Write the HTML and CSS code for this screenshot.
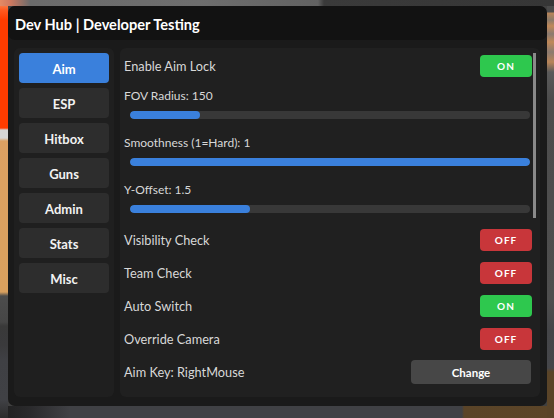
FILE: index.html
```html
<!DOCTYPE html>
<html>
<head>
<meta charset="utf-8">
<link rel="stylesheet" href="styles.css">
</head>
<body>
<div class="window">
  <div class="titlebar">Dev Hub | Developer Testing</div>
  <div class="body">
    <div class="sidebar">
      <div class="tab active">Aim</div>
      <div class="tab">ESP</div>
      <div class="tab">Hitbox</div>
      <div class="tab">Guns</div>
      <div class="tab">Admin</div>
      <div class="tab">Stats</div>
      <div class="tab">Misc</div>
    </div>
    <div class="content">
      <div class="scrollbar"></div>
      <div class="row">
        <span class="label">Enable Aim Lock</span>
        <span class="toggle on">ON</span>
      </div>
      <div class="slider">
        <span class="slabel">FOV Radius: 150</span>
        <div class="track"><div class="fill" style="width:17.5%"></div></div>
      </div>
      <div class="slider">
        <span class="slabel">Smoothness (1=Hard): 1</span>
        <div class="track"><div class="fill" style="width:100%"></div></div>
      </div>
      <div class="slider">
        <span class="slabel">Y-Offset: 1.5</span>
        <div class="track"><div class="fill" style="width:30%"></div></div>
      </div>
      <div class="row">
        <span class="label">Visibility Check</span>
        <span class="toggle off">OFF</span>
      </div>
      <div class="row">
        <span class="label">Team Check</span>
        <span class="toggle off">OFF</span>
      </div>
      <div class="row">
        <span class="label">Auto Switch</span>
        <span class="toggle on">ON</span>
      </div>
      <div class="row">
        <span class="label">Override Camera</span>
        <span class="toggle off">OFF</span>
      </div>
      <div class="row">
        <span class="label">Aim Key: RightMouse</span>
        <span class="change">Change</span>
      </div>
    </div>
  </div>
</div>
</body>
</html>
```

FILE: styles.css
```css
html, body {
  margin: 0;
  height: 100%;
}
body {
  width: 554px;
  height: 418px;
  overflow: hidden;
  box-sizing: border-box;
  padding: 6px 7px 0 8px;
  font-family: Lato, "Liberation Sans", sans-serif;
  background:
    linear-gradient(to right, #e48a64 0, #d07a60 10px, #6b6b6b 30px, #6e6e6e 200px, #626262 318px, #3a3a3a 324px, #363636 100%) left top / 100% 6px no-repeat,
    linear-gradient(to bottom, #f0a070 0, #ff5a20 10px, #ff3c00 20px, #ff3c00 128px, #d6d6d6 130px, #d6d6d6 138px, #dca062 141px, #d9a05e 292px, #4c4c4c 296px, #464646 322px, #393939 326px, #3a3a3c 345px, #3f4044 360px, #404145 400px, #2c2c2c 418px) left top / 8px 100% no-repeat,
    linear-gradient(to bottom, #4a4a4a 0, #4a4a4a 12px, #b88458 13px, #8a7a6a 20px, #c08858 26px, #8a7a70 34px, #c08858 42px, #8a7a70 52px, #b88458 62px, #5a5a5a 72px, #4c4c4c 100px, #4e4e4e 300px, #444548 330px, #45464a 368px, #5a4428 372px, #5a4428 100%) right top / 7px 100% no-repeat,
    linear-gradient(to right, #202020 0, #2a2a2c 30px, #404145 70px, #404145 462px, #5a4428 464px, #5c4528 100%) left bottom / 100% 12px no-repeat,
    #404040;
}
.window {
  width: 539px;
  height: 400px;
  background: #1a1a1a;
  border-radius: 7px;
  display: flex;
  flex-direction: column;
  overflow: hidden;
}
.titlebar {
  height: 31px;
  padding-top: 3px;
  flex: none;
  background: #121212;
  border-radius: 7px;
  color: #ffffff;
  font-weight: 700;
  font-size: 14.6px;
  line-height: 31px;
  padding-left: 7px;
}
.body {
  flex: 1;
  display: flex;
  gap: 6px;
  padding: 8px 7px 9px 6px;
  min-height: 0;
}
.sidebar {
  width: 100px;
  flex: none;
  background: #1f1f1f;
  border-radius: 6px;
  padding: 5px;
  box-sizing: border-box;
  display: flex;
  flex-direction: column;
  gap: 5px;
}
.tab {
  height: 30px;
  flex: none;
  box-sizing: border-box;
  padding-top: 2px;
  border-radius: 4px;
  background: #2d2d2d;
  color: #f2f2f2;
  font-weight: 700;
  font-size: 13px;
  display: flex;
  align-items: center;
  justify-content: center;
}
.tab.active {
  background: #3a80dc;
  color: #ffffff;
}
.content {
  flex: 1;
  position: relative;
  background: #202020;
  border-radius: 6px;
  padding: 3px 8px 0 4px;
  display: flex;
  flex-direction: column;
  gap: 3px;
}
.scrollbar {
  position: absolute;
  right: 4px;
  top: 5px;
  width: 3px;
  height: 165px;
  background: #8a8a8a;
}
.row {
  height: 30px;
  flex: none;
  display: flex;
  align-items: center;
  justify-content: space-between;
}
.label {
  color: #d8d8d8;
  font-size: 12.75px;
}
.toggle {
  width: 52px;
  height: 22px;
  border-radius: 4px;
  color: #ffffff;
  font-weight: 700;
  font-size: 10px;
  letter-spacing: 1px;
  display: flex;
  align-items: center;
  justify-content: center;
}
.toggle.on { background: #2ec84e; }
.toggle.off { background: #c8363a; }
.change {
  width: 120px;
  height: 24px;
  margin-right: 1px;
  border-radius: 4px;
  background: #474747;
  color: #ffffff;
  font-weight: 700;
  font-size: 11.5px;
  display: flex;
  align-items: center;
  justify-content: center;
}
.slider {
  height: 44px;
  flex: none;
  display: flex;
  flex-direction: column;
}
.slabel {
  color: #d8d8d8;
  font-size: 12px;
  line-height: 24px;
}
.track {
  margin: 3px 2px 0 6px;
  height: 8px;
  border-radius: 4px;
  background: #383838;
  overflow: hidden;
}
.fill {
  height: 100%;
  border-radius: 4px;
  background: #3a80dc;
}
```
